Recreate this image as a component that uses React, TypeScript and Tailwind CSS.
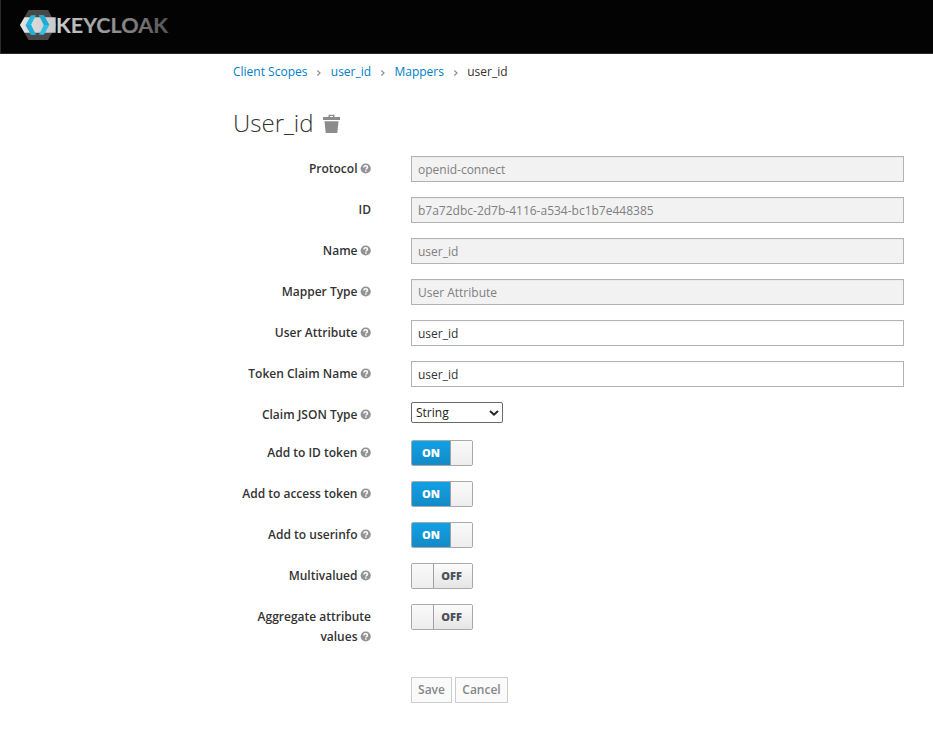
import React from "react";

function HelpIcon() {
  return (
    <svg className="ml-[2.5px] inline-block h-[11px] w-[11px] align-[-1px]" viewBox="0 0 11 11">
      <circle cx="5.7" cy="5.5" r="5.1" fill="#939393" />
      <path d="M3.8 4.5c.1-1.2.9-1.7 1.9-1.7 1.1 0 1.8.6 1.8 1.5 0 1.2-1.6 1.2-1.6 2.2" fill="none" stroke="#fff" strokeWidth="1.5" />
      <rect x="5.1" y="7.3" width="1.5" height="1.4" fill="#fff" />
    </svg>
  );
}

function Row({ label, help = true, className = "mb-[15px]", children }: { label: string; help?: boolean; className?: string; children: React.ReactNode }) {
  const words = label.split(" ");
  const last = words.pop();
  return (
    <div className={`flex items-start ${className}`}>
      <label className="mt-[3px] w-[138px] shrink-0 text-right font-semibold leading-5 text-[#333]">
        {words.length > 0 && words.join(" ") + " "}
        <span className="whitespace-nowrap">
          {last}
          {help && <HelpIcon />}
        </span>
      </label>
      <div className="ml-10 min-w-0 flex-1">{children}</div>
    </div>
  );
}

function Field({ value, disabled = false }: { value: string; disabled?: boolean }) {
  return (
    <input
      readOnly
      disabled={disabled}
      value={value}
      className="block h-[26px] w-full border border-[#b3b3b3] bg-white px-[6px] pt-[2px] pb-px text-[12px] text-[#333] shadow-[inset_0_1px_1px_rgba(0,0,0,0.03)] disabled:bg-[#f2f2f2] disabled:text-[#808080]"
    />
  );
}

function Toggle({ on }: { on: boolean }) {
  return (
    <div className="flex h-[26px] w-[62px] overflow-hidden rounded-[2px] border border-[#a9a9a9] text-[11px] font-extrabold leading-6">
      {on ? (
        <>
          <span className="w-[38px] bg-linear-to-b from-[#10a0e6] to-[#138bc6] text-center text-white">ON</span>
          <span className="flex-1 border-l border-[#a0a0a0] bg-linear-to-b from-[#fafafa] to-[#ededed]" />
        </>
      ) : (
        <>
          <span className="w-[22px] border-r border-[#a0a0a0] bg-linear-to-b from-[#fafafa] to-[#ededed]" />
          <span className="flex-1 bg-linear-to-b from-[#fcfcfc] to-[#e5e5e5] pr-[3px] text-center text-[#4d5258]">OFF</span>
        </>
      )}
    </div>
  );
}

function Logo() {
  return (
    <svg className="ml-5 h-[32px] w-[150px]" viewBox="20 9 150 32">
      <defs>
        <linearGradient id="word" gradientUnits="userSpaceOnUse" x1="56" y1="0" x2="168" y2="0">
          <stop offset="0" stopColor="#cfcfcf" />
          <stop offset="1" stopColor="#555" />
        </linearGradient>
        <linearGradient id="band" x1="0" y1="0" x2="1" y2="0">
          <stop offset="0" stopColor="#e4e4e4" />
          <stop offset="1" stopColor="#c8c8c8" />
        </linearGradient>
      </defs>
      <path d="M28.5 10H48l8.5 15-8.5 15H28.5L20 25z" fill="#484848" />
      <path d="M24.5 17.3H55.7v15.4H24.5L20 25z" fill="url(#band)" />
      <path d="M31 15.3h4.9L31 25l4.9 9.7H31L25.6 25z" fill="#27b9e0" />
      <path d="M25.6 25H31l4.9 9.7H31z" fill="#22aed8" />
      <path d="M39 15.3h4.9l5.4 9.7-5.4 9.7H39l4.9-9.7z" fill="#2fc0e5" />
      <path d="M39 15.3h4.9l5.4 9.7h-5.4z" fill="#20a9d2" />
      <text x="56" y="32.7" fill="url(#word)" stroke="url(#word)" strokeWidth=".15" fontFamily="Lato, sans-serif" fontSize="21.4" fontWeight="700" textLength="112" lengthAdjust="spacingAndGlyphs">KEYCLOAK</text>
    </svg>
  );
}

function Separator() {
  return (
    <svg className="mx-[9px] mt-px h-[6px] w-[5.3px]" viewBox="0 0 5 6">
      <path d="M1.2 .5 3.9 3 1.2 5.5" fill="none" stroke="#8a8a8a" strokeWidth="1.1" />
    </svg>
  );
}

export default function App() {
  return (
    <div className="h-[745px] w-[933px] overflow-hidden bg-white font-['Open_Sans',sans-serif] text-[12px] text-[#333]">
      <header className="h-[54px] border-b border-l border-[#2b2b2b] bg-[#030303] pt-[9px]">
        <div className="-ml-px"><Logo /></div>
      </header>
      <main className="pr-[29px] pl-[233px]">
        <nav className="mt-2 flex h-5 items-center leading-5">
          <a className="text-[#0080c8]">Client Scopes</a>
          <Separator />
          <a className="text-[#0080c8]">user_id</a>
          <Separator />
          <a className="text-[#0080c8]">Mappers</a>
          <Separator />
          <span>user_id</span>
        </nav>
        <h1 className="mt-[27px] flex h-[28px] items-center text-[24px] font-light leading-7">
          User_id
          <svg className="ml-[9px] h-[19px] w-[17px]" viewBox="0 0 17 19">
            <path d="M5.5 3V.8h6V3H17v3H0V3zM7 3h3V2H7zM1.5 7.2h14L14.3 19H2.7z" fill="#8c8c8c" fillRule="evenodd" />
          </svg>
        </h1>
        <form className="mt-[19px]">
          <Row label="Protocol"><Field disabled value="openid-connect" /></Row>
          <Row label="ID" help={false}><Field disabled value="b7a72dbc-2d7b-4116-a534-bc1b7e448385" /></Row>
          <Row label="Name"><Field disabled value="user_id" /></Row>
          <Row label="Mapper Type"><Field disabled value="User Attribute" /></Row>
          <Row label="User Attribute"><Field value="user_id" /></Row>
          <Row label="Token Claim Name"><Field value="user_id" /></Row>
          <Row label="Claim JSON Type" className="mb-[15px] h-[23px]">
            <div className="flex h-[21px] w-[92px] items-center justify-between rounded-[2px] border border-[#696969] bg-white pr-[3px] pl-1 text-[#222]">
              String
              <svg className="h-[6px] w-[10px]" viewBox="0 0 10 6">
                <path d="M1 1l4 3.7L9 1" fill="none" stroke="#222" strokeWidth="1.9" />
              </svg>
            </div>
          </Row>
          <Row label="Add to ID token"><Toggle on /></Row>
          <Row label="Add to access token"><Toggle on /></Row>
          <Row label="Add to userinfo"><Toggle on /></Row>
          <Row label="Multivalued"><Toggle on={false} /></Row>
          <Row label="Aggregate attribute values" className="h-[73px]"><Toggle on={false} /></Row>
          <div className="ml-[178px] flex gap-[3px] font-semibold text-[#858789]">
            <button type="button" className="h-[26px] w-[41px] border border-[#cdcdcd] bg-[#fafafa]">Save</button>
            <button type="button" className="h-[26px] w-[53px] border border-[#cdcdcd] bg-[#fafafa]">Cancel</button>
          </div>
        </form>
      </main>
    </div>
  );
}
